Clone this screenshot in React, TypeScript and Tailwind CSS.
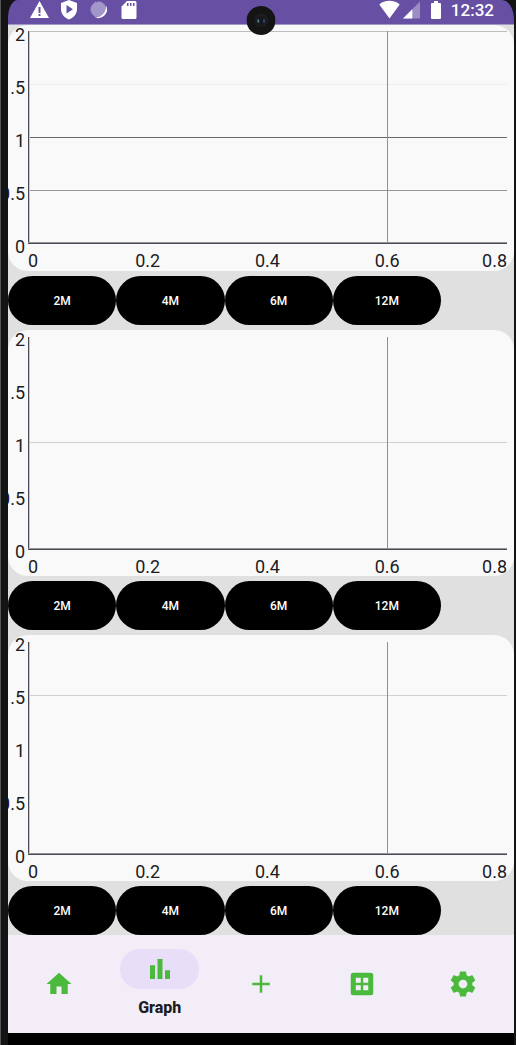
import React from "react";

type GridLine = { y: number; color: string };

const charts: { id: string; lines: GridLine[]; top: string }[] = [
  {
    id: "first",
    top: "mt-[6px]",
    lines: [
      { y: 0, color: "#bdbdbd" },
      { y: 53, color: "#eeeeee" },
      { y: 106, color: "#68686c" },
      { y: 159, color: "#97979b" },
    ],
  },
  { id: "second", top: "mt-[7px]", lines: [{ y: 105, color: "#cfcfcf" }] },
  { id: "third", top: "mt-[7px]", lines: [{ y: 53, color: "#cfcfcf" }] },
];

const yLabels = ["2", "1.5", "1", "0.5", "0"];

const xLabels: { text: string; x: string; anchor: "start" | "middle" | "end" }[] = [
  { text: "0", x: "0%", anchor: "start" },
  { text: "0.2", x: "25%", anchor: "middle" },
  { text: "0.4", x: "50%", anchor: "middle" },
  { text: "0.6", x: "75%", anchor: "middle" },
  { text: "0.8", x: "100%", anchor: "end" },
];

const ranges = ["2M", "4M", "6M", "12M"];

const navItems = [
  { label: "Home", path: "M10 20v-6h4v6h5v-8h3L12 3 2 12h3v8z" },
  { label: "Graph", path: "M4 9h4v11H4zm12 4h4v7h-4zm-6-9h4v16h-4z", active: true },
  { label: "Add", path: "M19 13h-6v6h-2v-6H5v-2h6V5h2v6h6z" },
  {
    label: "Table",
    path: "M19 3H5a2 2 0 0 0-2 2v14a2 2 0 0 0 2 2h14a2 2 0 0 0 2-2V5a2 2 0 0 0-2-2zM11 17H7v-4h4zm0-6H7V7h4zm6 6h-4v-4h4zm0-6h-4V7h4z",
  },
  {
    label: "Settings",
    path: "M19.43 12.98c.04-.32.07-.64.07-.98s-.03-.66-.07-.98l2.11-1.65c.19-.15.24-.42.12-.64l-2-3.46c-.12-.22-.39-.3-.61-.22l-2.49 1c-.52-.4-1.08-.73-1.69-.98l-.38-2.65C14.46 2.18 14.25 2 14 2h-4c-.25 0-.46.18-.49.42l-.38 2.65c-.61.25-1.17.59-1.69.98l-2.49-1c-.23-.09-.49 0-.61.22l-2 3.46c-.13.22-.07.49.12.64l2.11 1.65c-.04.32-.07.65-.07.98s.03.66.07.98l-2.11 1.65c-.19.15-.24.42-.12.64l2 3.46c.12.22.39.3.61.22l2.49-1c.52.4 1.08.73 1.69.98l.38 2.65c.03.24.24.42.49.42h4c.25 0 .46-.18.49-.42l.38-2.65c.61-.25 1.17-.59 1.69-.98l2.49 1c.23.09.49 0 .61-.22l2-3.46c.12-.22.07-.49-.12-.64l-2.11-1.65zM12 15.5c-1.93 0-3.5-1.57-3.5-3.5s1.57-3.5 3.5-3.5 3.5 1.57 3.5 3.5-1.57 3.5-3.5 3.5z",
  },
];

function StatusBar() {
  return (
    <header className="relative flex h-[25px] items-start justify-between rounded-tl-[10px_18px] rounded-tr-[12px_20px] border-b border-[#a596c8] bg-[#6750a4] pl-[21px] pr-5 text-white">
      <div className="flex h-5 items-center gap-3">
        <svg className="h-5 w-5" viewBox="0 0 20 20" fill="currentColor" aria-hidden="true">
          <path fillRule="evenodd" d="M10.500 1 20 18H1zM9.500 7v6h2V7zm0 7v2h2v-2z" />
        </svg>
        <svg className="h-5 w-4" viewBox="0 0 16 20" fill="currentColor" aria-hidden="true">
          <path fillRule="evenodd" d="M8 0 16 3v6c0 5-3.300 8.700-8 10.500C3.300 17.700 0 14 0 9V3zM5.500 5v8.500L12 9.200z" />
        </svg>
        <svg className="h-5 w-5" viewBox="0 0 20 20" fill="none" aria-hidden="true">
          <circle cx="9.500" cy="9.500" r="7.500" fill="#fff" fillOpacity=".4" />
          <circle cx="9.500" cy="9.500" r="7.700" stroke="#fff" strokeOpacity=".6" strokeDasharray="1 1.500" />
          <path d="M17 5.500A8.700 8.700 0 0 1 6 17.500 11 11 0 0 0 17 5.500z" fill="#fff" />
        </svg>
        <svg className="h-5 w-4" viewBox="0 0 16 20" fill="currentColor" aria-hidden="true">
          <path fillRule="evenodd" d="M6 1h8a1.500 1.500 0 0 1 1.500 1.500v15A1.500 1.500 0 0 1 14 19H2a1.500 1.500 0 0 1-1.500-1.500V6.500zM6 3v3h1.500V3zm3 0v3h1.500V3zm3 0v3h1.500V3z" />
        </svg>
      </div>
      <div className="flex h-5 items-center">
        <svg className="h-5 w-[22px]" viewBox="0 0 22 20" fill="currentColor" aria-hidden="true">
          <path d="M10.500 18.500.3 4.500C3 2 6.500.8 10.500.8S18 2 20.700 4.500z" />
        </svg>
        <svg className="ml-[2px] h-5 w-[18px]" viewBox="0 0 18 20" fill="currentColor" aria-hidden="true">
          <path d="M17 1.500v17H0z" opacity=".35" />
          <path d="M9.300 9.200v9.300H0z" />
        </svg>
        <svg className="ml-[10px] h-5 w-[10px]" viewBox="0 0 10 20" fill="currentColor" aria-hidden="true">
          <path d="M3 1h4v2h2q1 0 1 1v14q0 1-1 1H1q-1 0-1-1V4q0-1 1-1h2z" />
        </svg>
        <time className="ml-[10px] text-[17px] font-medium leading-5">12:32</time>
      </div>
      <svg className="absolute left-1/2 top-[6px] z-10 h-[29px] w-[29px] -translate-x-1/2" viewBox="0 0 29 29" aria-hidden="true">
        <circle cx="14.500" cy="14.500" r="14.500" fill="#141414" />
        <circle cx="14.500" cy="14.500" r="7" fill="#1c1c1e" />
        <circle cx="14.500" cy="14.500" r="4" fill="#17171b" />
        <ellipse cx="11.800" cy="15" rx="1" ry="2" fill="#4b7d80" />
        <ellipse cx="17.500" cy="15" rx="1" ry="2" fill="#38498c" />
      </svg>
    </header>
  );
}

function ChartCard({ lines, top }: { lines: GridLine[]; top: string }) {
  return (
    <section className="flex h-[246px] overflow-hidden rounded-[20px] bg-[#f9f9f9] pr-[7px] text-lg leading-5 text-[#1c1b1f]">
      <div className="flex w-5 shrink-0 flex-col items-end justify-between pb-[14px] pr-[3px]">
        {yLabels.map((label) => (
          <span key={label}>{label}</span>
        ))}
      </div>
      <svg className={`${top} h-[239px] min-w-0 flex-1 overflow-visible`} role="img" aria-label="Chart">
        {lines.map((line) => (
          <rect key={line.y} x="0" y={line.y} width="100%" height="1" fill={line.color} />
        ))}
        <rect x="75%" y="0" width="1" height="212" fill="#8f8f93" shapeRendering="crispEdges" />
        <rect x="0" y="0" width="1" height="213" fill="#4a4852" />
        <rect x="1" y="0" width="1" height="212" fill="#c9c8cd" />
        <rect x="0" y="211" width="100%" height="1" fill="#94939a" />
        <rect x="0" y="212" width="100%" height="1" fill="#4a4852" />
        {xLabels.map((label) => (
          <text key={label.text} x={label.x} y="236" textAnchor={label.anchor} fill="currentColor">
            {label.text}
          </text>
        ))}
      </svg>
    </section>
  );
}

function RangeButtons() {
  return (
    <div className="flex max-w-[433px]">
      {ranges.map((range) => (
        <button key={range} type="button" className="h-[49px] flex-1 rounded-full bg-black text-xs font-medium text-white">
          {range}
        </button>
      ))}
    </div>
  );
}

function BottomNav() {
  return (
    <nav className="grid h-[98px] grid-cols-5 bg-[#f3edf7]">
      {navItems.map((item) => (
        <button
          key={item.label}
          type="button"
          aria-label={item.label}
          className="flex flex-col items-center justify-center gap-2"
        >
          <span className={item.active ? "flex h-10 w-[79px] items-center justify-center rounded-full bg-[#e8def8]" : "flex"}>
            <svg className="h-[30px] w-[30px]" viewBox="0 0 24 24" fill="#4ab93c" aria-hidden="true">
              <path fillRule="evenodd" d={item.path} />
            </svg>
          </span>
          {item.active && <span className="text-base font-extrabold leading-[22px] text-[#1c1b1f]">{item.label}</span>}
        </button>
      ))}
    </nav>
  );
}

export default function App() {
  return (
    <div className="border-l border-[#555555] bg-[#141414] pl-[7px] pr-[2px] font-[Roboto,sans-serif]">
      <StatusBar />
      <main className="flex flex-col gap-[5px] bg-[#e0e0e0]">
        {charts.map((chart) => (
          <React.Fragment key={chart.id}>
            <ChartCard lines={chart.lines} top={chart.top} />
            <RangeButtons />
          </React.Fragment>
        ))}
      </main>
      <BottomNav />
      <div className="h-3 bg-black" />
    </div>
  );
}
